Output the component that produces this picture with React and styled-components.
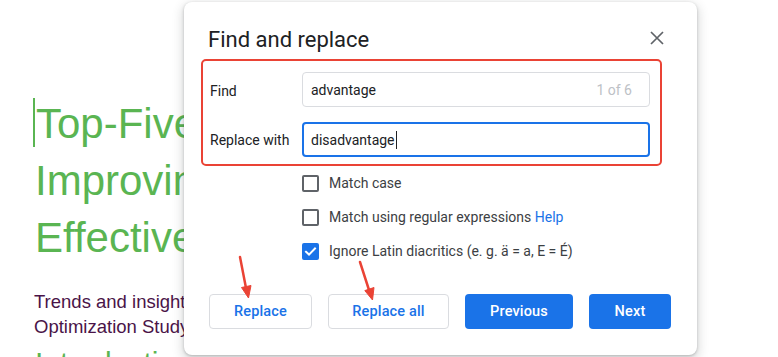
import React from "react";
import styled, { createGlobalStyle } from "styled-components";

const Global = createGlobalStyle`
  html, body { margin: 0; padding: 0; background: #ffffff; }
  body { width: 778px; height: 357px; overflow: hidden; position: relative; }
  * { box-sizing: border-box; }
`;

const Page = styled.div`
  position: relative;
  width: 778px;
  height: 357px;
  overflow: hidden;
  background: #fff;
`;

const Doc = styled.div`
  padding: 95px 0 0 35px;
  font-family: "Liberation Sans", Arial, sans-serif;
  white-space: nowrap;
`;

const Heading = styled.h1`
  margin: 0;
  font-weight: 400;
  font-size: 42px;
  line-height: 57px;
  color: #5ab552;
`;

const DocCaret = styled.span`
  display: inline-block;
  width: 2px;
  height: 49px;
  margin-left: -2px;
  margin-right: 1px;
  background: #5ab552;
  vertical-align: -9px;
`;

const Subtitle = styled.p`
  margin: 23px 0 0 -1px;
  font-size: 18.5px;
  line-height: 25px;
  color: #4a1448;
`;

const SectionTitle = styled.h2`
  margin: 4px 0 0;
  font-weight: 400;
  font-size: 30px;
  line-height: 40px;
  color: #5ab552;
`;

const Dialog = styled.div`
  position: absolute;
  left: 184px;
  top: 2px;
  width: 513px;
  height: 353px;
  background: #fff;
  border-radius: 8px;
  box-shadow: 0 1px 3px rgba(60, 64, 67, 0.3), 0 4px 10px 3px rgba(60, 64, 67, 0.15);
  padding: 24px 25px 26px 24px;
  font-family: Roboto, "Liberation Sans", Arial, sans-serif;
  display: flex;
  flex-direction: column;
`;

const Header = styled.div`
  display: flex;
  align-items: center;
  justify-content: space-between;
`;

const Title = styled.h2`
  margin: 0;
  font-size: 22px;
  line-height: 28px;
  font-weight: 400;
  color: #202124;
`;

const CloseButton = styled.button`
  width: 24px;
  height: 24px;
  padding: 0;
  margin: 0 3px 4px 0;
  border: none;
  background: transparent;
  display: flex;
  align-items: center;
  justify-content: center;
  color: #5f6368;
`;

const Highlight = styled.div`
  margin: 5px 0 0 -7px;
  width: 461px;
  border: 2px solid #ea4335;
  border-radius: 5px;
  padding: 11px 10px 7px 7px;
  display: grid;
  grid-template-columns: 92px 1fr;
  row-gap: 15px;
  align-items: center;
`;

const Label = styled.div`
  font-size: 14px;
  color: #202124;
  padding-top: ${(p) => p.$nudge || 0}px;
`;

const Field = styled.div`
  height: 35px;
  border: ${(p) => (p.$focused ? "2px solid #1a73e8" : "1px solid #dadce0")};
  border-radius: 4px;
  padding: 0 ${(p) => (p.$focused ? 16 : 17)}px 0 ${(p) => (p.$focused ? 7 : 8)}px;
  display: flex;
  align-items: center;
  justify-content: space-between;
  font-size: 14px;
  color: #202124;
`;

const FieldText = styled.span`
  display: inline-flex;
  align-items: center;
`;

const TextCaret = styled.span`
  display: inline-block;
  width: 1px;
  height: 18px;
  margin-left: 1px;
  background: #202124;
`;

const Count = styled.span`
  color: #bdc1c6;
`;

const Options = styled.div`
  padding-left: 94px;
  display: flex;
  flex-direction: column;
`;

const Option = styled.label`
  height: 34px;
  display: flex;
  align-items: center;
  gap: 10px;
  font-size: 14px;
  color: #3c4043;
`;

const Box = styled.span`
  width: 17px;
  height: 17px;
  border-radius: 2px;
  border: ${(p) => (p.$checked ? "none" : "2px solid #5f6368")};
  background: ${(p) => (p.$checked ? "#1a73e8" : "transparent")};
  display: flex;
  align-items: center;
  justify-content: center;
`;

const Link = styled.a`
  color: #1a73e8;
  text-decoration: none;
`;

const Buttons = styled.div`
  margin: 26px 0 0 1px;
  display: flex;
  gap: 16px;
`;

const Button = styled.button`
  width: ${(p) => p.$w}px;
  height: 35px;
  padding: 0;
  border-radius: 4px;
  font-family: Roboto, "Liberation Sans", Arial, sans-serif;
  font-size: 14.5px;
  font-weight: 500;
  letter-spacing: 0.15px;
  border: ${(p) => (p.$primary ? "none" : "1px solid #dadce0")};
  background: ${(p) => (p.$primary ? "#1a73e8" : "#fff")};
  color: ${(p) => (p.$primary ? "#fff" : "#1a73e8")};
`;

const Annotations = styled.svg`
  position: absolute;
  left: 0;
  top: 0;
  pointer-events: none;
`;

const Check = () => (
  <svg width="13" height="13" viewBox="0 0 13 13">
    <path d="M2 6.8 L5 9.6 L11 3.4" fill="none" stroke="#fff" strokeWidth="2" strokeLinecap="square" />
  </svg>
);

const CloseIcon = () => (
  <svg width="14" height="14" viewBox="0 0 14 14">
    <path d="M1 1 L13 13 M13 1 L1 13" stroke="#5f6368" strokeWidth="1.7" />
  </svg>
);

export default function App() {
  return (
    <Page>
      <Global />
      <Doc>
        <Heading>
          <DocCaret />Top-Five Tips for
          <br />
          Improving Website
          <br />
          Effectiveness
        </Heading>
        <Subtitle>
          Trends and insights from the Website
          <br />
          Optimization Study 2023
        </Subtitle>
        <SectionTitle>Introduction</SectionTitle>
      </Doc>

      <Dialog>
        <Header>
          <Title>Find and replace</Title>
          <CloseButton aria-label="Close">
            <CloseIcon />
          </CloseButton>
        </Header>

        <Highlight>
          <Label $nudge={3}>Find</Label>
          <Field>
            <FieldText>advantage</FieldText>
            <Count>1 of 6</Count>
          </Field>
          <Label>Replace with</Label>
          <Field $focused>
            <FieldText>
              disadvantage
              <TextCaret />
            </FieldText>
          </Field>
        </Highlight>

        <Options>
          <Option>
            <Box />
            Match case
          </Option>
          <Option>
            <Box />
            <span>
              Match using regular expressions <Link>Help</Link>
            </span>
          </Option>
          <Option>
            <Box $checked>
              <Check />
            </Box>
            Ignore Latin diacritics (e. g. ä = a, E = É)
          </Option>
        </Options>

        <Buttons>
          <Button $w={103}>Replace</Button>
          <Button $w={121}>Replace all</Button>
          <Button $w={108} $primary>
            Previous
          </Button>
          <Button $w={82} $primary>
            Next
          </Button>
        </Buttons>
      </Dialog>

      <Annotations width="778" height="357" viewBox="0 0 778 357">
        <g fill="#ea4335" stroke="#ea4335">
          <line x1="240" y1="257" x2="246" y2="288" strokeWidth="2.5" strokeLinecap="round" />
          <polygon points="248.5,298 251,285.5 241.5,287.5" strokeWidth="1" strokeLinejoin="round" />
          <line x1="360" y1="262" x2="369" y2="290" strokeWidth="2.5" strokeLinecap="round" />
          <polygon points="372.5,300 374,287.5 364.8,290.6" strokeWidth="1" strokeLinejoin="round" />
        </g>
      </Annotations>
    </Page>
  );
}
